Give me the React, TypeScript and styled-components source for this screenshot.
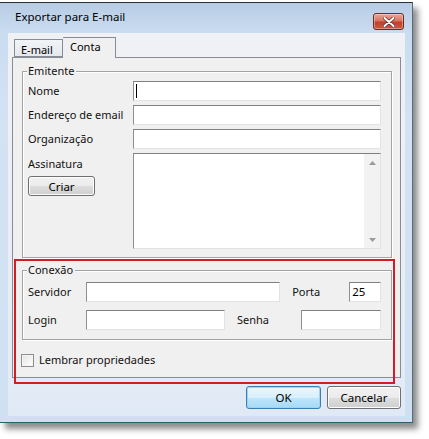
import styled, { createGlobalStyle } from "styled-components";

const GlobalStyle = createGlobalStyle`
  html, body {
    margin: 0;
    padding: 0;
    background: #ffffff;
  }
  body {
    font-family: "Noto Sans", "Open Sans", "DejaVu Sans", sans-serif;
    font-size: 11px;
    color: #111;
  }
`;

const Stage = styled.div`
  position: relative;
  width: 429px;
  height: 439px;
  padding-top: 2px;
  box-sizing: border-box;
  overflow: hidden;
`;

const Window = styled.div`
  width: 413px;
  height: 421px;
  box-sizing: border-box;
  display: flex;
  flex-direction: column;
  border-top: 1px solid #2c2f33;
  border-right: 1px solid #55687c;
  border-bottom: 1px solid #2d5f6c;
  background: linear-gradient(#b7cce4 0px, #cadcf0 30px, #d3e3f4 120px, #cfe0f2 100%);
  box-shadow: 5px 6px 6px rgba(0, 0, 0, 0.45);
`;

const TitleBar = styled.div`
  height: 30px;
  flex: 0 0 30px;
  display: flex;
  align-items: flex-start;
  padding-left: 15px;
`;

const Title = styled.span`
  margin-top: 6px;
  line-height: 16px;
  font-size: 11.5px;
  color: #000;
`;

const CloseButton = styled.div`
  margin-left: auto;
  margin-right: 8px;
  margin-top: 10px;
  width: 31px;
  height: 17px;
  box-sizing: border-box;
  border: 1px solid #6e2b22;
  border-radius: 3px;
  background: linear-gradient(#e9a99b 0%, #d9745f 45%, #c0402b 55%, #cc5a3f 100%);
  box-shadow: inset 0 0 0 1px rgba(255, 255, 255, 0.35);
  display: flex;
  align-items: center;
  justify-content: center;
`;

const Client = styled.div`
  flex: 0 0 383px;
  margin: 0 7px 0 8px;
  padding: 4px 4px 0 4px;
  box-sizing: border-box;
  display: flex;
  flex-direction: column;
  background: linear-gradient(#eff1f5 0%, #eaeef4 60%, #e0eaf6 100%);
`;

const TabRow = styled.div`
  height: 20px;
  display: flex;
  align-items: flex-end;
  padding-left: 2px;
  position: relative;
  z-index: 1;
`;

const Tab = styled.div<{ $active?: boolean }>`
  box-sizing: border-box;
  border: 1px solid #898c95;
  border-bottom: ${(p) => (p.$active ? "none" : "1px solid #898c95")};
  border-left: ${(p) => (p.$active ? "none" : "1px solid #898c95")};
  margin-bottom: ${(p) => (p.$active ? "-1px" : "0")};
  height: ${(p) => (p.$active ? "21px" : "18px")};
  width: ${(p) => (p.$active ? "53px" : "49px")};
  padding-left: ${(p) => (p.$active ? "7px" : "6px")};
  padding-top: ${(p) => (p.$active ? "1px" : "2px")};
  line-height: 15px;
  background: ${(p) =>
    p.$active ? "#f0f0f0" : "linear-gradient(#f2f4f7, #e4e8ee)"};
  color: #000;
`;

const Panel = styled.div`
  height: 321px;
  box-sizing: border-box;
  border: 1px solid #898c95;
  background: #f0f0f0;
  padding: 13px 8px 0 9px;
  display: flex;
  flex-direction: column;
`;

const GroupBox = styled.div<{ $top: number; $bottom: number; $gapAfter?: number }>`
  position: relative;
  border: 1px solid #a3a3a3;
  box-shadow: inset 1px 1px 0 #ffffff, 1px 1px 0 #ffffff;
  padding: ${(p) => p.$top}px 10px ${(p) => p.$bottom}px 5px;
  margin-bottom: ${(p) => p.$gapAfter ?? 0}px;
`;

const Legend = styled.span`
  position: absolute;
  top: -9px;
  left: 4px;
  padding: 0 2px 0 1px;
  background: #f0f0f0;
  line-height: 16px;
  color: #111;
`;

const FormGrid = styled.div`
  display: grid;
  grid-template-columns: 105px 248px;
  row-gap: 4px;
`;

const Label = styled.span`
  display: flex;
  align-items: center;
  line-height: 16px;
  white-space: nowrap;
  color: #111;
`;

const TextBox = styled.div<{ $w?: number }>`
  position: relative;
  box-sizing: border-box;
  height: 20px;
  width: ${(p) => (p.$w ? `${p.$w}px` : "auto")};
  background: #ffffff;
  border-top: 1px solid #7f7f7f;
  border-left: 1px solid #8f8f8f;
  border-right: 1px solid #e3e3e3;
  border-bottom: 1px solid #e3e3e3;
  padding-left: 2px;
  line-height: 17px;
  font-size: 11.5px;
  color: #000;
`;

const Caret = styled.span`
  position: absolute;
  left: 2px;
  top: 2px;
  width: 1px;
  height: 14px;
  background: #000;
`;

const SignatureCol = styled.div`
  display: flex;
  flex-direction: column;
  align-items: flex-start;
  padding-top: 3px;
  gap: 4px;
`;

const TextArea = styled.div`
  box-sizing: border-box;
  height: 96px;
  background: #ffffff;
  border-top: 1px solid #7f7f7f;
  border-left: 1px solid #8f8f8f;
  border-right: 1px solid #e3e3e3;
  border-bottom: 1px solid #e3e3e3;
  display: flex;
  justify-content: flex-end;
`;

const ScrollTrack = styled.div`
  width: 16px;
  background: #f2f2f2;
  display: flex;
  flex-direction: column;
  justify-content: space-between;
  align-items: center;
  padding: 7px 0 6px;
`;

const Button = styled.div<{ $w: number; $h: number; $default?: boolean }>`
  box-sizing: border-box;
  width: ${(p) => p.$w}px;
  height: ${(p) => p.$h}px;
  border: 1px solid ${(p) => (p.$default ? "#3c7fb1" : "#707070")};
  border-radius: 3px;
  background: ${(p) =>
    p.$default
      ? "linear-gradient(#eaf6fd 0%, #d9f0fc 50%, #bee6fd 51%, #a7d9f5 100%)"
      : "linear-gradient(#f2f2f2 0%, #ebebeb 50%, #dddddd 51%, #cfcfcf 100%)"};
  box-shadow: inset 0 0 0 1px ${(p) => (p.$default ? "#9ed3f1" : "#fcfcfc")};
  display: flex;
  align-items: center;
  justify-content: center;
  font-size: 11.5px;
  color: #000;
`;

const ConnBody = styled.div`
  display: flex;
  flex-direction: column;
  gap: 8px;
`;

const ConnRow = styled.div`
  display: flex;
  align-items: center;
`;

const RowLabel = styled.span<{ $w: number; $indent?: number }>`
  width: ${(p) => p.$w}px;
  flex: 0 0 ${(p) => p.$w}px;
  margin-left: ${(p) => p.$indent ?? 0}px;
  line-height: 16px;
  color: #111;
`;

const CheckRow = styled.div`
  margin-top: 12px;
  margin-left: -1px;
  display: flex;
  align-items: center;
  gap: 5px;
  line-height: 16px;
  color: #111;
`;

const CheckBox = styled.div`
  width: 13px;
  height: 13px;
  box-sizing: border-box;
  border: 1px solid #8e8f8f;
  background: linear-gradient(135deg, #e4e4e4 0%, #ffffff 100%);
  box-shadow: inset 0 0 0 1px #f4f4f4;
`;

const ButtonBar = styled.div`
  display: flex;
  justify-content: flex-end;
  gap: 6px;
  margin-top: 8px;
`;

const Annotation = styled.div`
  position: absolute;
  left: 14px;
  top: 259px;
  width: 381px;
  height: 125px;
  box-sizing: border-box;
  border: 2px solid #d11d23;
  pointer-events: none;
`;

function Arrow({ up }: { up?: boolean }) {
  return (
    <svg width="7" height="4" viewBox="0 0 7 4">
      <path d={up ? "M0 4 L3.5 0 L7 4 Z" : "M0 0 L3.5 4 L7 0 Z"} fill="#9a9a9a" />
    </svg>
  );
}

export default function App() {
  return (
    <>
      <GlobalStyle />
      <Stage>
        <Window>
          <TitleBar>
            <Title>Exportar para E-mail</Title>
            <CloseButton>
              <svg width="12" height="10" viewBox="0 0 12 10">
                <path
                  d="M1.5 1 L10.5 9 M10.5 1 L1.5 9"
                  stroke="#5a2a24"
                  strokeWidth="3.4"
                  strokeLinecap="round"
                />
                <path
                  d="M1.5 1 L10.5 9 M10.5 1 L1.5 9"
                  stroke="#ffffff"
                  strokeWidth="2"
                  strokeLinecap="round"
                />
              </svg>
            </CloseButton>
          </TitleBar>
          <Client>
            <TabRow>
              <Tab>E-mail</Tab>
              <Tab $active>Conta</Tab>
            </TabRow>
            <Panel>
              <GroupBox $top={9} $bottom={8} $gapAfter={12}>
                <Legend>Emitente</Legend>
                <FormGrid>
                  <Label>Nome</Label>
                  <TextBox>
                    <Caret />
                  </TextBox>
                  <Label>Endereço de email</Label>
                  <TextBox />
                  <Label>Organização</Label>
                  <TextBox />
                  <SignatureCol>
                    <Label>Assinatura</Label>
                    <Button $w={67} $h={20}>
                      Criar
                    </Button>
                  </SignatureCol>
                  <TextArea>
                    <ScrollTrack>
                      <Arrow up />
                      <Arrow />
                    </ScrollTrack>
                  </TextArea>
                </FormGrid>
              </GroupBox>
              <GroupBox $top={11} $bottom={9}>
                <Legend>Conexão</Legend>
                <ConnBody>
                  <ConnRow>
                    <RowLabel $w={58}>Servidor</RowLabel>
                    <TextBox $w={195} />
                    <RowLabel $w={57} $indent={12}>
                      Porta
                    </RowLabel>
                    <TextBox $w={32}>25</TextBox>
                  </ConnRow>
                  <ConnRow>
                    <RowLabel $w={58}>Login</RowLabel>
                    <TextBox $w={139} />
                    <RowLabel $w={64} $indent={12}>
                      Senha
                    </RowLabel>
                    <TextBox $w={80} />
                  </ConnRow>
                </ConnBody>
              </GroupBox>
              <CheckRow>
                <CheckBox />
                Lembrar propriedades
              </CheckRow>
            </Panel>
            <ButtonBar>
              <Button $w={75} $h={23} $default>
                OK
              </Button>
              <Button $w={74} $h={23}>
                Cancelar
              </Button>
            </ButtonBar>
          </Client>
        </Window>
        <Annotation />
      </Stage>
    </>
  );
}
